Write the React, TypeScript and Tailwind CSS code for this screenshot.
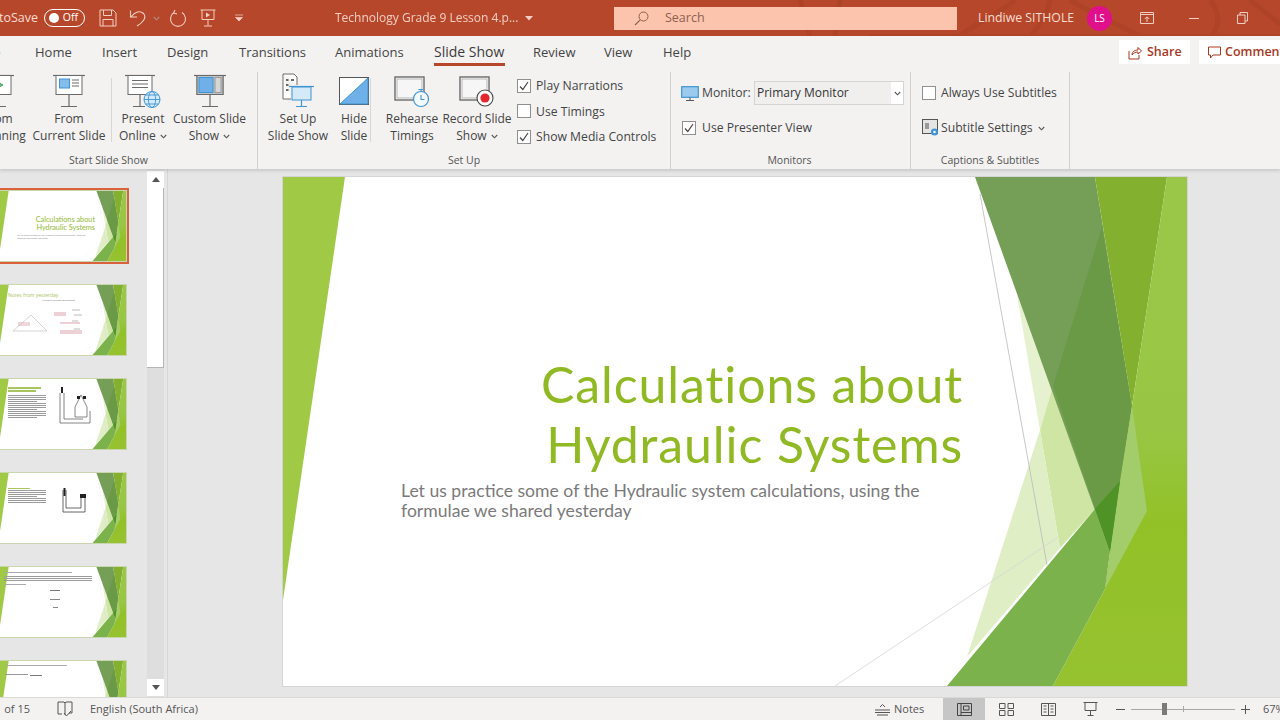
import type { ReactNode } from "react";

const GRAY = "#6a6a6a";
const BLUE = "#3f94d1";

function Chevron({ className = "" }: { className?: string }) {
  return (
    <svg width="7" height="5" viewBox="0 0 7 5" className={`inline-block ${className}`}>
      <path d="M0.8 1 L3.5 3.8 L6.2 1" fill="none" stroke="#555" strokeWidth="1.1" />
    </svg>
  );
}

function CheckBox({ checked = false }: { checked?: boolean }) {
  return (
    <span className="w-[14px] h-[14px] shrink-0 bg-white border border-[#8f8f8f] flex items-center justify-center">
      {checked && (
        <svg width="10" height="10" viewBox="0 0 10 10">
          <path d="M1 5.5 L3.8 8.5 L9 1" fill="none" stroke="#444" strokeWidth="1.2" />
        </svg>
      )}
    </span>
  );
}

// slide master artwork, drawn in slide coordinates so thumbnails can reuse it
function SlideArt() {
  return (
    <svg viewBox="0 0 904 509" preserveAspectRatio="none" className="absolute inset-0 w-full h-full">
      <defs>
        <linearGradient id="band" x1="0" y1="0" x2="0" y2="1">
          <stop offset="0" stopColor="#9ac748" />
          <stop offset="0.5" stopColor="#98c644" />
          <stop offset="0.68" stopColor="#92c127" />
          <stop offset="1" stopColor="#96c230" />
        </linearGradient>
      </defs>
      <polygon points="0,0 62,0 0,423" fill="#a0ca45" />
      <polygon points="734,118 770,209 757,253" fill="#e6f1cf" />
      <polygon points="770,209 812,332 777,371 757,253" fill="#cfe5a3" />
      <polygon points="757,253 777,371 684,480" fill="#e0eec6" />
      <line x1="697" y1="17" x2="764" y2="388" stroke="#b9b9b9" strokeWidth="0.8" />
      <line x1="552" y1="509" x2="774" y2="361" stroke="#d6d6d6" strokeWidth="0.8" />
      <polygon points="692,0 812,0 849,229 827,375" fill="#759f57" />
      <polygon points="819,50 849,229 827,375 770,209" fill="#6b9a47" />
      <polygon points="812,0 884,0 849,229" fill="#84b02f" />
      <polygon points="884,0 904,0 904,509 770,509 822,412 849,229" fill="url(#band)" />
      <polygon points="849,229 864,334 822,412 837,304" fill="#a3cd6a" />
      <polygon points="664,509 812,332 827,375 822,412 770,509" fill="#7cb24c" />
      <polygon points="812,332 837,304 827,375" fill="#4f9225" />
    </svg>
  );
}

function Bars({ rows, w = "w-[44px]" }: { rows: number; w?: string }) {
  return (
    <div className={`flex flex-col gap-[1px] ${w}`}>
      {Array.from({ length: rows }).map((_, i) => (
        <div key={i} className={`h-[1px] bg-[#9a9a9a] ${i % 4 === 3 ? "w-3/4" : "w-full"}`} />
      ))}
    </div>
  );
}

function Thumb({ selected = false, children }: { selected?: boolean; children?: ReactNode }) {
  return (
    <div
      className={`relative shrink-0 w-[128px] h-[72px] bg-white border border-[#c9d6ad] ${
        selected ? "outline-2 outline-[#d9623a] outline-offset-0" : ""
      }`}
    >
      <SlideArt />
      <div className="relative h-full">{children}</div>
    </div>
  );
}

function RibbonButton({
  width,
  icon,
  lines,
  caret = false,
}: {
  width: string;
  icon: ReactNode;
  lines: [string, string];
  caret?: boolean;
}) {
  return (
    <div className={`${width} shrink-0 flex flex-col items-center`}>
      <div className="h-[37px] flex items-start justify-center">{icon}</div>
      <div className="text-[12px] leading-[17px] text-center text-[#444] whitespace-nowrap">{lines[0]}</div>
      <div className="text-[12px] leading-[17px] text-center text-[#444] whitespace-nowrap">
        {lines[1]} {caret && <Chevron className="ml-[1px] align-middle" />}
      </div>
    </div>
  );
}

function ProjectorStand({ children }: { children: ReactNode }) {
  return (
    <svg width="36" height="36" viewBox="0 0 36 36">
      <path d="M2 2.5 H34" stroke={GRAY} strokeWidth="1.2" />
      <rect x="5" y="2.5" width="26" height="19" fill="#fff" stroke={GRAY} strokeWidth="1" />
      <path d="M18 21.5 V33 M10 33.5 H26" stroke={GRAY} strokeWidth="1.2" />
      {children}
    </svg>
  );
}

function GroupLabel({ children, className = "" }: { children: ReactNode; className?: string }) {
  return <div className={`text-[10.5px] leading-[14px] text-center text-[#555] ${className}`}>{children}</div>;
}

const TABS: [string, string][] = [
  ["Home", "w-[67px]"],
  ["Insert", "w-[65px]"],
  ["Design", "w-[72px]"],
  ["Transitions", "w-[96px]"],
  ["Animations", "w-[99px]"],
];

const TABS_AFTER: [string, string][] = [
  ["Review", "w-[71px]"],
  ["View", "w-[59px]"],
  ["Help", "w-[40px]"],
];

export default function App() {
  return (
    <div
      className="w-[1280px] h-[720px] flex flex-col overflow-hidden bg-[#e6e6e6]"
      style={{ fontFamily: "'Open Sans', 'Noto Sans', sans-serif" }}
    >
      {/* Title bar */}
      <div className="relative h-[36px] shrink-0 flex items-center bg-[#b7472a] text-[#f6ddd4] text-[12.5px] overflow-hidden">
        {/* faint office background pattern */}
        <svg width="500" height="36" viewBox="0 0 500 36" className="absolute right-0 top-0" fill="none">
          <path d="M20 0 L30 36 M60 0 L55 36 M180 36 C200 20 225 10 235 0 M250 36 C262 24 268 10 270 0 M290 0 C310 12 340 26 360 36 M430 0 C440 12 440 26 432 36 M470 0 L500 24" stroke="#af4327" strokeWidth="5" />
          <path d="M90 35 H500" stroke="#af4327" strokeWidth="2" />
        </svg>
        <span className="relative w-[38px] shrink-0 flex justify-end overflow-hidden whitespace-nowrap">toSave</span>
        <span className="relative ml-[6px] w-[41px] h-[18px] rounded-full border border-white flex items-center justify-between pl-[4px] pr-[6px] text-[10.5px] text-white">
          <span className="w-[10px] h-[10px] rounded-full bg-white" />
          Off
        </span>
        <svg width="18" height="18" viewBox="0 0 18 18" className="relative ml-[14px]">
          <path d="M1 1 H14 L17 4 V17 H1 Z M4.5 1 V6.5 H12.5 V1 M4 17 V10.5 H14 V17" fill="none" stroke="#f3cfc3" strokeWidth="1" />
        </svg>
        <svg width="18" height="18" viewBox="0 0 18 18" className="relative ml-[12px]">
          <path d="M1.5 1.5 V8 H8 M1.8 8 C6 3 11 1 14.5 4.5 C18 8.5 14 13.5 8 17" fill="none" stroke="#f3cfc3" strokeWidth="1.1" />
        </svg>
        <Chevron className="relative ml-[6px] opacity-70 invert" />
        <svg width="18" height="18" viewBox="0 0 18 18" className="relative ml-[9px]">
          <path d="M5 3.5 A7.5 7.5 0 1 0 13 3.5 M6 1 L4.5 4 L8 5" fill="none" stroke="#f3cfc3" strokeWidth="1.1" />
        </svg>
        <svg width="16" height="18" viewBox="0 0 16 18" className="relative ml-[13px]">
          <path d="M0.5 1 H15.5 M2 1 V10.5 H14 V1 M8 10.5 V16.5 M4 17 H12" fill="none" stroke="#f3cfc3" strokeWidth="1" />
          <path d="M6 3.5 L10 6 L6 8.5 Z" fill="#f3cfc3" />
        </svg>
        <svg width="10" height="8" viewBox="0 0 10 8" className="relative ml-[18px]">
          <path d="M1 1 H9 M1.5 3.5 H8.5 L5 7 Z" fill="#f3cfc3" stroke="#f3cfc3" strokeWidth="0.7" />
        </svg>
        <span className="relative ml-[91px] w-[183px] whitespace-nowrap opacity-90 text-[12px]">Technology Grade 9 Lesson 4.p...</span>
        <svg width="8" height="5" viewBox="0 0 8 5" className="relative ml-[7px]">
          <path d="M0 0 H8 L4 4.5 Z" fill="#f3cfc3" />
        </svg>
        <div className="relative ml-[81px] w-[343px] h-[23px] shrink-0 bg-[#fdc4ad] flex items-center text-[#8c5f50]">
          <svg width="15" height="15" viewBox="0 0 15 15" className="ml-[20px]">
            <circle cx="9.5" cy="5.5" r="4.5" fill="none" stroke="#8c5f50" strokeWidth="1" />
            <path d="M6.2 8.8 L1 14" stroke="#8c5f50" strokeWidth="1.1" />
          </svg>
          <span className="ml-[16px]">Search</span>
        </div>
        <span className="relative ml-[21px] w-[98px] whitespace-nowrap text-[12.3px]">Lindiwe SITHOLE</span>
        <span className="relative ml-[11px] w-[25px] h-[25px] rounded-full bg-[#e0108c] flex items-center justify-center text-[10px] text-white">
          LS
        </span>
        <svg width="14" height="12" viewBox="0 0 14 12" className="relative ml-[28px]">
          <path d="M0.5 0.5 H13.5 V11.5 H0.5 Z M0.5 2.5 H13.5 M7 10 V5 M4.8 7 L7 4.8 L9.2 7" fill="none" stroke="#f3cfc3" />
        </svg>
        <span className="relative ml-[35px] w-[10px] h-[1px] bg-[#f3cfc3]" />
        <svg width="11" height="12" viewBox="0 0 11 12" className="relative ml-[38px]">
          <path d="M0.5 3 H8 V11.5 H0.5 Z M3 3 V0.5 H10.5 V9 H8" fill="none" stroke="#f3cfc3" />
        </svg>
      </div>

      {/* Tabs */}
      <div className="h-[36px] shrink-0 flex items-start bg-[#f3f2f1] text-[13px] text-[#444] relative">
        <span className="w-[35px] shrink-0 pt-[7px] leading-[18px] overflow-hidden">
          <span className="inline-block -ml-[20px]">File</span>
        </span>
        {TABS.map(([label, width]) => (
          <span key={label} className={`${width} shrink-0 pt-[7px] leading-[18px]`}>
            {label}
          </span>
        ))}
        <span className="w-[71px] shrink-0 pt-[7px] leading-[18px] font-medium text-[#3b3b3b] border-b-[3px] border-[#b7472a] h-[30px] whitespace-nowrap text-[14px]">
          Slide Show
        </span>
        <span className="w-[28px] shrink-0" />
        {TABS_AFTER.map(([label, width]) => (
          <span key={label} className={`${width} shrink-0 pt-[7px] leading-[18px]`}>
            {label}
          </span>
        ))}
        <span className="ml-[416px] mt-[4px] w-[71px] h-[24px] shrink-0 bg-white flex items-center pl-[9px] pt-[1px] gap-[5px] text-[#a5391f] font-semibold text-[12.5px]">
          <svg width="14" height="14" viewBox="0 0 14 14">
            <path d="M1 5 V13 H11 V9 M4 9 C4 5.5 7 4 10 4 V1.5 L13.5 5 L10 8 V6 C7.5 6 5.5 7 4 9" fill="none" stroke="#a5391f" strokeWidth="1" />
          </svg>
          Share
        </span>
        <span className="ml-[9px] mt-[4px] w-[90px] h-[24px] shrink-0 bg-white flex items-center pl-[9px] pt-[1px] gap-[4px] text-[#a5391f] font-semibold text-[12.5px] whitespace-nowrap overflow-hidden">
          <svg width="13" height="13" viewBox="0 0 13 13" className="shrink-0">
            <path d="M0.5 1 H12.5 V9 H5 L2.5 12 V9 H0.5 Z" fill="none" stroke="#a5391f" strokeWidth="1" />
          </svg>
          Comments
        </span>
      </div>

      {/* Ribbon */}
      <div className="h-[97px] shrink-0 flex bg-[#f3f2f1] shadow-[0_2px_3px_rgba(0,0,0,0.12)] relative overflow-hidden">
        {/* Start Slide Show */}
        <div className="w-[258px] shrink-0 border-r border-[#d2d0ce] flex flex-col justify-between pb-[2px] relative">
          <div className="flex pt-[1px] -ml-[32px]">
            <RibbonButton
              width="w-[60px]"
              lines={["From", "Beginning"]}
              icon={
                <ProjectorStand>
                  <path d="M14 7 L23 12 L14 17 Z" fill="#6cc17e" stroke="#2e9a50" strokeWidth="0.8" />
                </ProjectorStand>
              }
            />
            <div className="w-[4px]" />
            <RibbonButton
              width="w-[74px]"
              lines={["From", "Current Slide"]}
              icon={
                <ProjectorStand>
                  <rect x="8.5" y="6" width="10" height="9" fill="#86bce8" stroke={BLUE} strokeWidth="1" />
                  <path d="M21 7 H28 M21 10 H28 M21 13 H28" stroke={GRAY} strokeWidth="1" />
                </ProjectorStand>
              }
            />
            <div className="w-[6px] mr-[6px] border-r border-[#d9d7d5] h-[64px] mt-[5px]" />
            <RibbonButton
              width="w-[50px]"
              lines={["Present", "Online"]}
              caret
              icon={
                <svg width="40" height="36" viewBox="0 0 40 36">
                  <path d="M2 2.5 H32" stroke={GRAY} strokeWidth="1.2" />
                  <rect x="5" y="2.5" width="24" height="19" fill="#fff" stroke={GRAY} />
                  <path d="M9 7.5 H25 M9 11 H25 M9 14.5 H25" stroke={GRAY} />
                  <path d="M17 21.5 V33 M10 33.5 H22" stroke={GRAY} strokeWidth="1.2" />
                  <circle cx="29" cy="26.5" r="8" fill="#d5eaf8" stroke={BLUE} />
                  <path d="M21 26.5 H37 M22.5 22 H35.5 M22.5 31 H35.5" stroke={BLUE} strokeWidth="0.9" />
                  <ellipse cx="29" cy="26.5" rx="3.6" ry="8" fill="none" stroke={BLUE} strokeWidth="0.9" />
                </svg>
              }
            />
            <div className="w-[4px]" />
            <RibbonButton
              width="w-[75px]"
              lines={["Custom Slide", "Show"]}
              caret
              icon={
                <ProjectorStand>
                  <rect x="5" y="2.5" width="26" height="19" fill="#c3c3c3" stroke={GRAY} />
                  <rect x="7" y="4.5" width="14" height="15" fill="#6fb0e8" stroke={BLUE} />
                  <rect x="23" y="4.5" width="6" height="15" fill="#d6d6d6" stroke="#9a9a9a" />
                </ProjectorStand>
              }
            />
          </div>
          <GroupLabel className="pr-[40px]">Start Slide Show</GroupLabel>
        </div>

        {/* Set Up */}
        <div className="w-[413px] shrink-0 border-r border-[#d2d0ce] flex flex-col justify-between pb-[2px]">
          <div className="flex pt-[1px] pl-[8px]">
            <RibbonButton
              width="w-[64px]"
              lines={["Set Up", "Slide Show"]}
              icon={
                <svg width="34" height="36" viewBox="0 0 34 36">
                  <path d="M2 1 H13 L16 4 V12 M2 1 V26 H10" fill="#fff" stroke={GRAY} />
                  <path d="M5 7 H7.5 M10 7 H13 M5 12 H7.5 M5 17 H7.5" stroke={GRAY} strokeWidth="2" />
                  <path d="M8 13.5 H33" stroke={BLUE} strokeWidth="1.2" />
                  <rect x="11" y="14" width="19" height="13" fill="#d5eaf8" stroke={BLUE} />
                  <path d="M20.5 27 V33 M15 33.5 H26" stroke={BLUE} strokeWidth="1.2" />
                </svg>
              }
            />
            <div className="w-[8px]" />
            <RibbonButton
              width="w-[32px]"
              lines={["Hide", "Slide"]}
              icon={
                <svg width="30" height="28" viewBox="0 0 30 28" className="mt-[4px]">
                  <rect x="0.5" y="0.5" width="29" height="27" fill="#fff" stroke="#555" />
                  <path d="M1 27 L29 1 V27 Z" fill="#6fb0e8" stroke={BLUE} />
                </svg>
              }
            />
            <div className="w-[1px] h-[64px] mt-[5px] bg-[#d9d7d5] mr-[15px]" />
            <RibbonButton
              width="w-[52px]"
              lines={["Rehearse", "Timings"]}
              icon={
                <svg width="36" height="36" viewBox="0 0 36 36">
                  <rect x="1" y="4" width="29" height="23" fill="#fff" stroke={GRAY} strokeWidth="1.4" />
                  <rect x="3" y="6" width="25" height="19" fill="#f6f6f6" stroke="#b5b5b5" />
                  <circle cx="27" cy="26" r="7.5" fill="#f4f9fd" stroke={BLUE} strokeWidth="1.2" />
                  <path d="M27 22 V26.5 H30.5 M24.5 16.5 H29.5 M27 16.5 V18.5" fill="none" stroke={BLUE} strokeWidth="1.1" />
                </svg>
              }
            />
            <div className="w-[4px]" />
            <RibbonButton
              width="w-[70px]"
              lines={["Record Slide", "Show"]}
              caret
              icon={
                <svg width="36" height="36" viewBox="0 0 36 36">
                  <rect x="1" y="4" width="29" height="23" fill="#fff" stroke={GRAY} strokeWidth="1.4" />
                  <rect x="3" y="6" width="25" height="19" fill="#f6f6f6" stroke="#b5b5b5" />
                  <circle cx="26" cy="25" r="8" fill="#fff" stroke="#444" strokeWidth="1.1" />
                  <circle cx="26" cy="25" r="4.6" fill="#e5262c" />
                </svg>
              }
            />
            <div className="ml-[5px] flex flex-col gap-[10.5px] pt-[5px] text-[12.2px] leading-[15px] text-[#444] whitespace-nowrap">
              <label className="flex items-center gap-[5px]">
                <CheckBox checked />
                Play Narrations
              </label>
              <label className="flex items-center gap-[5px]">
                <CheckBox />
                Use Timings
              </label>
              <label className="flex items-center gap-[5px]">
                <CheckBox checked />
                Show Media Controls
              </label>
            </div>
          </div>
          <GroupLabel>Set Up</GroupLabel>
        </div>

        {/* Monitors */}
        <div className="w-[240px] shrink-0 border-r border-[#d2d0ce] flex flex-col justify-between pb-[2px] text-[12.2px] text-[#444]">
          <div className="flex flex-col pl-[10px] pt-[9px] gap-[14px]">
            <div className="flex items-center h-[24px]">
              <svg width="18" height="15" viewBox="0 0 18 15">
                <rect x="0.7" y="0.7" width="16.6" height="10.6" fill="#9cc9ee" stroke={BLUE} strokeWidth="1.2" />
                <path d="M9 11.5 V14 M5 14.5 H13" stroke="#555" />
              </svg>
              <span className="ml-[3px] w-[52px]">Monitor:</span>
              <div className="w-[150px] h-[24px] border border-[#d6d4d2] bg-[#f0efee] flex items-center">
                <span className="flex-1 pl-[2px] text-[#333] text-[12px]">Primary Monitor</span>
                <span className="w-[12px] h-full bg-white flex items-center justify-center">
                  <Chevron />
                </span>
              </div>
            </div>
            <label className="flex items-center gap-[6px] h-[18px] pl-[1px]">
              <CheckBox checked />
              Use Presenter View
            </label>
          </div>
          <GroupLabel className="pr-[2px]">Monitors</GroupLabel>
        </div>

        {/* Captions & Subtitles */}
        <div className="w-[159px] shrink-0 border-r border-[#d2d0ce] flex flex-col justify-between pb-[2px] text-[12.2px] text-[#444]">
          <div className="flex flex-col pl-[11px] pt-[12px] gap-[17px] whitespace-nowrap">
            <label className="flex items-center gap-[5px] h-[18px]">
              <CheckBox />
              Always Use Subtitles
            </label>
            <div className="flex items-center h-[18px]">
              <svg width="18" height="18" viewBox="0 0 18 18">
                <rect x="0.5" y="0.5" width="15" height="14" fill="#e4e4e4" stroke="#555" />
                <rect x="3" y="4" width="4" height="6" fill="#9a9a9a" />
                <circle cx="12.5" cy="13" r="3.6" fill="#3f94d1" />
                <circle cx="12.5" cy="13" r="1.3" fill="#fff" />
              </svg>
              <span className="ml-[1px]">Subtitle Settings</span>
              <Chevron className="ml-[5px]" />
            </div>
          </div>
          <GroupLabel>Captions &amp; Subtitles</GroupLabel>
        </div>
      </div>

      {/* Workspace */}
      <div className="flex-1 min-h-0 flex bg-[#e6e6e6]">
        {/* Thumbnails */}
        <div className="w-[147px] shrink-0 overflow-hidden pt-[21px]">
          <div className="-ml-[1px] flex flex-col gap-[22px]">
            <Thumb selected>
              <div
                className="pt-[25px] pr-[31px] text-right text-[7.3px] leading-[8.4px] text-[#92b92f]"
                style={{ fontFamily: "Lato, sans-serif" }}
              >
                Calculations about
                <br />
                Hydraulic Systems
              </div>
              <div className="mt-[1px] ml-[17px] text-[2.2px] leading-[3px] text-[#777]">
                Let us practice some of the Hydraulic system calculations, using the
                <br />
                formulae we shared yesterday
              </div>
            </Thumb>
            <Thumb>
              <div className="pt-[7px] pl-[8px] text-[5px] leading-[6px] text-[#a9c55e]">Notes from yesterday</div>
              <div className="ml-[42px] text-[2.4px] leading-[5px] text-[#666]">Hydraulic system calculations</div>
              <svg width="100" height="40" viewBox="0 0 100 40" className="mt-[2px]">
                <path d="M13 26 L31 10 L47 26 Z" fill="none" stroke="#bbb" strokeWidth="0.6" />
                <path d="M18 18 H30 M18 20 H30" stroke="#d8a0a8" strokeWidth="0.8" />
                <path d="M54 8 H66 M54 10 H66 M60 18 H80 M60 26 H82 M60 28 H82" stroke="#d08a98" strokeWidth="0.8" />
                <path d="M72 5 H80 M74 10 H82 M72 16 H78 M74 24 H80" stroke="#aaa" strokeWidth="0.8" />
              </svg>
            </Thumb>
            <Thumb>
              <div className="flex pt-[8px] pl-[8px]">
                <div>
                  <div className="w-[33px] h-[2px] bg-[#a9c55e]" />
                  <div className="w-[28px] h-[2px] bg-[#a9c55e] mt-[1px] mb-[3px]" />
                  <Bars rows={12} w="w-[38px]" />
                </div>
                <svg width="40" height="42" viewBox="0 0 40 42" className="ml-[7px]">
                  <path d="M7 6 V36 H37 V24 M11 6 V32 H30" fill="none" stroke="#666" strokeWidth="0.8" />
                  <path d="M22 20 L28 8 L34 20 L34 30 H22 Z" fill="#fff" stroke="#555" strokeWidth="0.7" />
                  <rect x="8" y="0" width="2" height="6" fill="#222" />
                  <rect x="24" y="9" width="3" height="3" fill="#222" />
                  <rect x="30" y="9" width="3" height="3" fill="#222" />
                </svg>
              </div>
            </Thumb>
            <Thumb>
              <div className="flex pt-[15px] pl-[8px]">
                <div>
                  <div className="w-[22px] h-[1px] bg-[#a9c55e] mb-[1px]" />
                  <Bars rows={7} w="w-[38px]" />
                </div>
                <svg width="38" height="30" viewBox="0 0 38 30" className="ml-[9px]">
                  <path d="M8 2 V24 H30 V10 M11 2 V20 H26 V10" fill="none" stroke="#555" strokeWidth="0.9" />
                  <rect x="8.5" y="0" width="2" height="8" fill="#222" />
                  <rect x="25" y="6" width="6" height="4" fill="#222" />
                </svg>
              </div>
            </Thumb>
            <Thumb>
              <div className="pt-[5px] pl-[4px]">
                <div className="w-[68px] h-[1px] bg-[#aaa] mb-[3px]" />
                <Bars rows={3} w="w-[88px]" />
                <div className="w-[22px] h-[1px] bg-[#aaa] mt-[3px]" />
                <div className="ml-[44px] mt-[1px] flex flex-col items-center w-[14px] gap-[3px]">
                  <div className="w-[10px] h-[5px] border-b border-[#777]" />
                  <div className="w-[10px] h-[6px] border-b border-[#888]" />
                  <div className="w-[5px] h-[1px] mt-[4px] bg-[#888]" />
                </div>
              </div>
            </Thumb>
            <Thumb>
              <div className="pt-[4px] pl-[5px]">
                <div className="w-[62px] h-[1px] bg-[#aaa] mb-[6px]" />
                <div className="flex items-center gap-[1px]">
                  <div className="w-[23px] h-[1px] bg-[#999]" />
                  <div className="w-[12px] h-[4px] border-b border-[#777] ml-[1px]" />
                </div>
              </div>
            </Thumb>
          </div>
        </div>

        {/* Thumbnail scrollbar */}
        <div className="w-[17px] shrink-0 flex flex-col bg-[#dedede] pb-[1px]">
          <div className="h-[17px] bg-white flex items-center justify-center mt-[2px]">
            <svg width="8" height="5" viewBox="0 0 8 5">
              <path d="M0 5 L4 0 L8 5 Z" fill="#555" />
            </svg>
          </div>
          <div className="h-[180px] bg-white border-b border-r border-[#b5b5b5]" />
          <div className="flex-1" />
          <div className="h-[17px] bg-white flex items-center justify-center">
            <svg width="8" height="5" viewBox="0 0 8 5">
              <path d="M0 0 L4 5 L8 0 Z" fill="#555" />
            </svg>
          </div>
        </div>

        {/* Slide canvas */}
        <div className="flex-1 ml-[3px] border-l border-[#d6d6d6] pl-[115px] pt-[8px]">
          <div
            className="relative w-[904px] h-[509px] bg-white shadow-[0_0_0_1px_#d4d4d4]"
            style={{ fontFamily: "Lato, sans-serif" }}
          >
            <SlideArt />
            <div className="relative pt-[177px] pr-[224px] text-right text-[50px] leading-[60px] tracking-[0.9px] text-[#90b924]">
              Calculations about
              <br />
              Hydraulic Systems
            </div>
            <div className="relative mt-[7px] ml-[118px] text-[17.6px] leading-[20px] text-[#7a7a7a]">
              Let us practice some of the Hydraulic system calculations, using the
              <br />
              formulae we shared yesterday
            </div>
          </div>
        </div>
      </div>

      {/* Status bar */}
      <div className="h-[23px] shrink-0 flex items-center bg-[#f3f2f1] border-t border-[#d9d9d9] text-[11px] text-[#555] overflow-hidden [&>*]:shrink-0">
        <span className="w-[30px] flex justify-end overflow-hidden whitespace-nowrap">1 of 15</span>
        <svg width="16" height="16" viewBox="0 0 16 16" className="ml-[27px]">
          <path d="M1 1 H7 L8 2 L9 1 H15 V12 H12 M8 2 V14 M1 1 V13 H5 M7 12 L9.5 15 L14 10" fill="none" stroke="#555" />
        </svg>
        <span className="ml-[17px] w-[106px] whitespace-nowrap">English (South Africa)</span>
        <svg width="17" height="13" viewBox="0 0 17 13" className="ml-[678px]">
          <path d="M1 7 H16 M1 9.5 H16 M3 12 H14 M6 4 L8.5 1.5 L11 4" fill="none" stroke="#555" />
        </svg>
        <span className="ml-[3px] w-[30px]">Notes</span>
        <span className="ml-[19px] w-[42px] h-full bg-[#c6c6c6] flex items-center justify-center">
          <svg width="15" height="13" viewBox="0 0 15 13">
            <path d="M0.5 0.5 H14.5 V12.5 H0.5 Z M4 0.5 V12.5 M4 9.5 H14.5 M6.5 3 H12 V7 H6.5 Z" fill="none" stroke="#444" />
          </svg>
        </span>
        <svg width="15" height="13" viewBox="0 0 15 13" className="ml-[14px]">
          <path d="M0.5 0.5 H6 V5.5 H0.5 Z M9 0.5 H14.5 V5.5 H9 Z M0.5 7.5 H6 V12.5 H0.5 Z M9 7.5 H14.5 V12.5 H9 Z" fill="none" stroke="#555" />
        </svg>
        <svg width="15" height="13" viewBox="0 0 15 13" className="ml-[27px]">
          <path d="M0.5 0.5 H14.5 V12.5 H0.5 Z M7.5 0.5 V12.5 M2.5 3 H5.5 M2.5 6 H5.5 M2.5 9 H5.5 M9.5 3 H12.5 M9.5 6 H12.5 M9.5 9 H12.5" fill="none" stroke="#555" />
        </svg>
        <svg width="15" height="14" viewBox="0 0 15 14" className="ml-[27px]">
          <path d="M0.5 0.5 H14.5 M2 0.5 V8.5 H13 V0.5 M7.5 8.5 V13 M4.5 13.5 H10.5" fill="none" stroke="#555" />
        </svg>
        <span className="ml-[18px] w-[9px] h-[1px] bg-[#555]" />
        <div className="ml-[6px] w-[104px] h-[1px] bg-[#a8a8a8] flex items-center relative">
          <span className="absolute left-[31px] w-[5px] h-[12px] bg-[#7a7a7a]" />
          <span className="absolute left-[52px] w-[1px] h-[6px] bg-[#a8a8a8]" />
        </div>
        <svg width="9" height="9" viewBox="0 0 9 9" className="ml-[6px]">
          <path d="M4.5 0 V9 M0 4.5 H9" stroke="#555" />
        </svg>
        <span className="ml-[13px] whitespace-nowrap">67%</span>
      </div>
    </div>
  );
}
